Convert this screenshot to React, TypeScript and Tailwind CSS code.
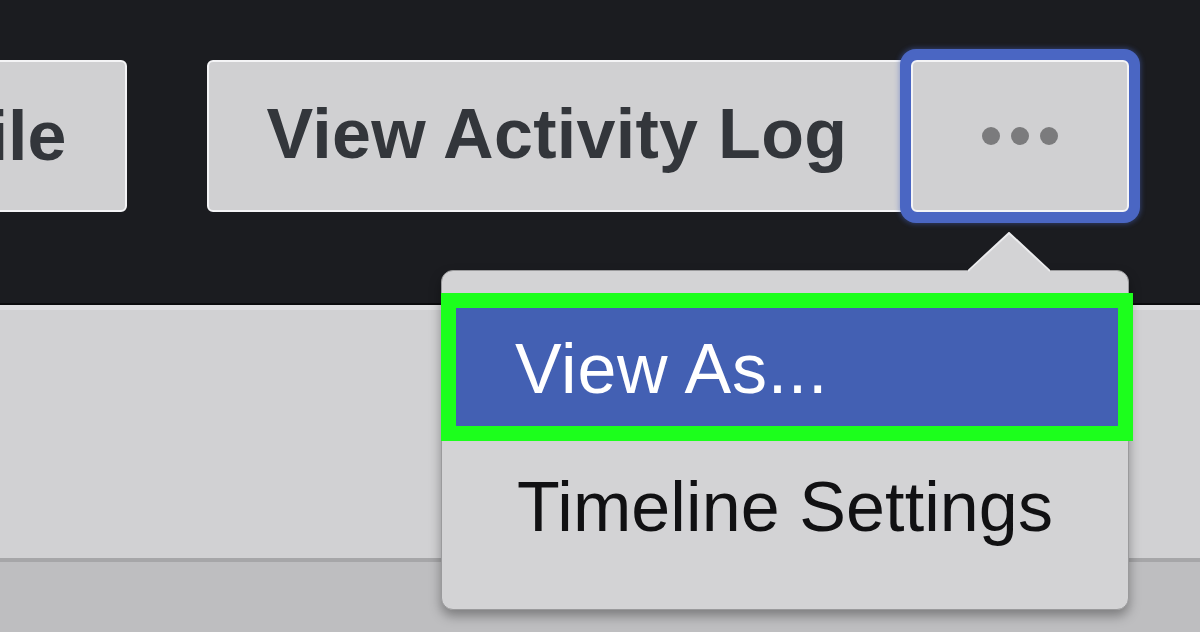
export default function App() {
  return (
    <div
      className="relative flex h-[632px] w-[1200px] flex-col overflow-hidden bg-[#bfbfc1]"
      style={{ fontFamily: '"Liberation Sans", Arial, sans-serif' }}
    >
      {/* dark profile header */}
      <div className="flex h-[305px] shrink-0 items-start border-b-2 border-[#0c0c0e] bg-[#1b1c20] pt-[60px]">
        <button className="-ml-[364px] flex h-[152px] shrink-0 items-center rounded-md border-2 border-[#f4f4f6] bg-[#d0d0d2] px-[59px] text-[70px] font-bold leading-none text-[#33363b]">
          Edit Profile
        </button>
        <div className="ml-[80px] flex">
          <button className="flex h-[152px] w-[700px] items-center rounded-md border-2 border-[#f4f4f6] bg-[#d0d0d2] pb-[4px] pl-[57px] text-[70px] font-bold leading-none tracking-[0.3px] text-[#33363b]">
            View Activity Log
          </button>
          <button className="ml-[4px] flex h-[152px] w-[218px] items-center justify-center gap-[11px] rounded-md border-2 border-[#f4f4f6] bg-[#d0d0d2] shadow-[0_0_0_11px_#4a66c3,0_0_5px_12px_rgba(74,102,195,0.45)]">
            <span className="h-[18px] w-[18px] rounded-full bg-[#7b7b7d]" />
            <span className="h-[18px] w-[18px] rounded-full bg-[#7b7b7d]" />
            <span className="h-[18px] w-[18px] rounded-full bg-[#7b7b7d]" />
          </button>
        </div>
      </div>

      {/* light content area */}
      <div className="h-[253px] shrink-0 border-t-[5px] border-[#dedee0] bg-[#d1d1d3]" />
      <div className="flex-1 border-t-[4px] border-[#a6a6a8] bg-[#bebec0]" />

      {/* dropdown menu */}
      <div className="absolute left-[441px] top-[270px] h-[340px] w-[688px] rounded-[12px] border border-[#9a9a9c] bg-[#d3d3d5] shadow-[0_6px_12px_rgba(0,0,0,0.35)]">
        <svg
          className="absolute -top-[39px] left-[526px]"
          width="82"
          height="40"
          viewBox="0 0 82 40"
        >
          <polygon points="0,40 41,1 82,40" fill="#d3d3d5" />
          <polyline
            points="0,39 41,1 82,39"
            fill="none"
            stroke="#ececee"
            strokeWidth="2"
          />
        </svg>
        <div className="mt-[22px] -ml-px w-[692px] border-[15px] border-[#1cff1c] bg-[#4360b3]">
          <div className="h-[118px] pl-[59px] pt-[26px] text-[70px] leading-none tracking-[0.7px] text-white">
            View As...
          </div>
        </div>
        <div className="mt-[31px] pl-[75px] text-[70px] leading-none tracking-[0.1px] text-[#111113]">
          Timeline Settings
        </div>
      </div>
    </div>
  );
}
